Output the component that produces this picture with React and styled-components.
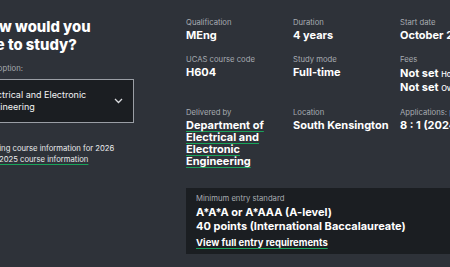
import React from "react";
import styled, { createGlobalStyle } from "styled-components";

const Global = createGlobalStyle`
  html, body { margin: 0; padding: 0; background: #2e3239; }
  body { width: 450px; height: 267px; overflow: hidden; font-family: Inter, "Noto Sans", sans-serif; color: #ffffff; }
`;

const Page = styled.div`
  width: 450px;
  height: 267px;
  overflow: hidden;
  background: #2e3239;
`;

const Row = styled.div`
  display: flex;
  gap: 52px;
  margin-left: -21px;
  width: 800px;
`;

const Left = styled.div`
  width: 155px;
  flex: none;
  padding-top: 18px;
`;

const Heading = styled.h2`
  margin: 0;
  font-size: 14.8px;
  line-height: 18px;
  font-weight: 800;
`;

const SmallLabel = styled.div`
  font-size: 7.7px;
  line-height: 12px;
  color: #a7abb1;
  white-space: nowrap;
  margin-top: ${(p) => p.$mt || 0}px;
`;

const Select = styled.div`
  margin-top: 4px;
  box-sizing: border-box;
  height: 44px;
  border: 1px solid #9a9ea5;
  background: #1b1e22;
  display: flex;
  align-items: center;
  justify-content: space-between;
  padding: 0 10px 0 4px;
  font-size: 9px;
  line-height: 12px;
  color: #f2f3f4;
  white-space: nowrap;
`;

const Note = styled.div`
  margin-top: 20px;
  font-size: 7.7px;
  line-height: 11px;
  color: #e9eaec;
  white-space: nowrap;
`;

const Link = styled.a`
  color: inherit;
  text-decoration: underline;
  text-decoration-color: #19a35a;
  text-decoration-thickness: 1px;
  text-underline-offset: 2px;
  font-weight: ${(p) => (p.$bold ? 700 : "inherit")};
`;

const Right = styled.div`
  flex: none;
  width: 600px;
  padding-top: 17px;
`;

const Grid = styled.div`
  display: grid;
  grid-template-columns: repeat(3, 107px);
  row-gap: 13px;
`;

const Item = styled.div``;

const Value = styled.div`
  font-size: 11px;
  line-height: ${(p) => p.$lh || 12}px;
  font-weight: 700;
  color: #ffffff;
  white-space: ${(p) => (p.$wrap ? "normal" : "nowrap")};
  max-width: ${(p) => (p.$wrap ? "85px" : "none")};
`;

const Sub = styled.span`
  font-size: 7.5px;
  line-height: 1;
  font-weight: 500;
`;

const Entry = styled.div`
  margin-top: 21px;
  background: #1b1e22;
  padding: 5px 10px 6px;
  height: 66px;
  box-sizing: border-box;
`;

const EntryValue = styled.div`
  font-size: 11px;
  line-height: 14px;
  font-weight: 700;
  white-space: nowrap;
`;

const EntryLink = styled.div`
  margin-top: 3px;
  font-size: 9.5px;
  line-height: 14px;
`;

const Chevron = () => (
  <svg width="9" height="6" viewBox="0 0 9 6" fill="none">
    <path d="M1 1l3.5 3.5L8 1" stroke="#d9dbde" strokeWidth="1.3" />
  </svg>
);

export default function App() {
  return (
    <Page>
      <Global />
      <Row>
        <Left>
          <Heading>
            How would you
            <br />
            like to study?
          </Heading>
          <SmallLabel $mt={9}>Your option:</SmallLabel>
          <Select>
            <span>
              Electrical and Electronic
              <br />
              Engineering
            </span>
            <Chevron />
          </Select>
          <Note>
            Showing course information for 2026
            <br />
            <Link href="#">View 2025 course information</Link>
          </Note>
        </Left>
        <Right>
          <Grid>
            <Item>
              <SmallLabel>Qualification</SmallLabel>
              <Value>MEng</Value>
            </Item>
            <Item>
              <SmallLabel>Duration</SmallLabel>
              <Value>4 years</Value>
            </Item>
            <Item>
              <SmallLabel>Start date</SmallLabel>
              <Value>October 2026</Value>
            </Item>
            <Item>
              <SmallLabel>UCAS course code</SmallLabel>
              <Value>H604</Value>
            </Item>
            <Item>
              <SmallLabel>Study mode</SmallLabel>
              <Value>Full-time</Value>
            </Item>
            <Item>
              <SmallLabel>Fees</SmallLabel>
              <Value $lh={14}>
                Not set <Sub>Home</Sub>
              </Value>
              <Value $lh={14}>
                Not set <Sub>Overseas</Sub>
              </Value>
            </Item>
            <Item>
              <SmallLabel>Delivered by</SmallLabel>
              <Value $wrap>
                <Link href="#">Department of Electrical and Electronic Engineering</Link>
              </Value>
            </Item>
            <Item>
              <SmallLabel>Location</SmallLabel>
              <Value>South Kensington</Value>
            </Item>
            <Item>
              <SmallLabel>Applications: places</SmallLabel>
              <Value>8 : 1 (2024)</Value>
            </Item>
          </Grid>
          <Entry>
            <SmallLabel>Minimum entry standard</SmallLabel>
            <EntryValue>A*A*A or A*AAA (A-level)</EntryValue>
            <EntryValue>40 points (International Baccalaureate)</EntryValue>
            <EntryLink>
              <Link href="#" $bold>
                View full entry requirements
              </Link>
            </EntryLink>
          </Entry>
        </Right>
      </Row>
    </Page>
  );
}
